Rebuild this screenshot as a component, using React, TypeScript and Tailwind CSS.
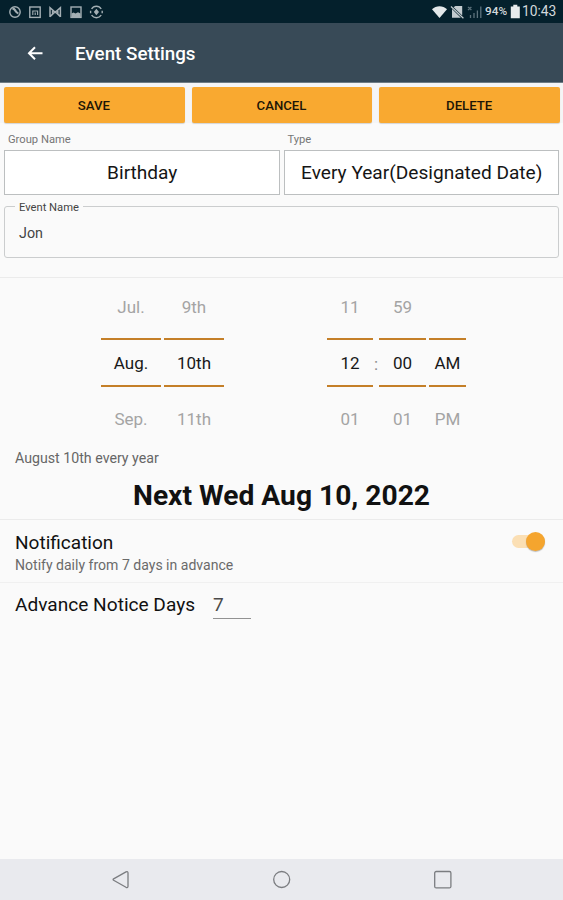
import { clsx } from "clsx"
import { useState } from "react"

type PickerColumn = {
  width: string
  values: [string, string, string]
}

const dateColumns: PickerColumn[] = [
  { width: "w-[60px]", values: ["Jul.", "Aug.", "Sep."] },
  { width: "w-[60px]", values: ["9th", "10th", "11th"] },
]

const StatusIcons = () => {
  return (
    <svg width="96" height="16" viewBox="0 0 96 16" fill="none" stroke="#a4afb4" strokeWidth="1.4">
      {/* Sync */}
      <circle cx="7" cy="8" r="5.2" />
      <path d="M4.4 4.6c2 0 2.2.8 3 2.2s1.4 2.4 3 2.6" strokeWidth="2.2" />
      {/* Calendar */}
      <rect x="21.8" y="3" width="10.4" height="10.4" />
      <path d="M24.8 11V7h4.8v4M27.2 8.5V11" strokeWidth="1.1" />
      {/* Mail */}
      <path d="M42 13V3.6l5.2 4.6 5.2-4.6V13M42 12.6l5.2-4.8 5.2 4.8M44.6 5.5v5M49.8 5.5v5" strokeWidth="1.5" />
      {/* Picture */}
      <rect x="63" y="3" width="10" height="10.4" />
      <path d="M63.5 9.6l2-1 2 1 2.5-1.4 2.5 1.4v3.8h-9z" fill="#a4afb4" stroke="none" />
      {/* Location */}
      <path d="M83.6 5a5.6 5.6 0 0 1 9.6 0M83.6 11a5.6 5.6 0 0 0 9.6 0M82.6 6.8v2.4M94.2 6.8v2.4" />
      <path d="M88.4 4.8L91 8l-2.6 3.2L85.8 8z" fill="#a4afb4" stroke="none" />
    </svg>
  )
}

const StatusBar = () => {
  return (
    <div className="flex h-[23px] items-center bg-[#04202c] pr-[6px] pl-[8px] text-[#d3d9dc]">
      <StatusIcons />
      <div className="ml-auto flex items-center">
        <svg width="52" height="16" viewBox="0 0 52 16" fill="none" className="mr-px">
          <path d="M0 5.2C4.2 1.2 10.8 1.2 15 5.2L7.5 14z" fill="#e3e8ea" />
          <path d="M23.4 2h6.8v9.6L21.6 3.2zM20 5l8.8 8.8H20z" fill="#c3cbcf" />
          <path d="M19 2.5l12.4 11.7" stroke="#c3cbcf" strokeWidth="1.2" />
          <path d="M36 3l3.4 3M39.4 3L36 6M38.5 14v-3M42 14V9M45.4 14V6.5M48.8 14V2.5" stroke="#5d727c" strokeWidth="1.3" />
        </svg>
        <span className="w-[24px] pt-px text-[11.8px] leading-none font-medium">94%</span>
        <svg width="11" height="15" viewBox="0 0 11 15" className="mr-px ml-px">
          <path d="M3.3 0.8h4V2.4h2.5V14.2H0.8V2.4h2.5z" fill="#e8ebec" />
        </svg>
        <span className="w-[35px] pt-px text-[13.8px] leading-none whitespace-nowrap">10:43</span>
      </div>
    </div>
  )
}

const Column = ({ width, values }: PickerColumn) => {
  return (
    <div className={clsx("flex flex-col text-center text-[17px] leading-[46px] text-[#a4a4a4]", width)}>
      <div className="h-[53px] leading-[44px]">{values[0]}</div>
      <div className="h-[49px] border-y-2 border-[#c47f28] text-[#181818]">{values[1]}</div>
      <div className="pt-[9px]">{values[2]}</div>
    </div>
  )
}

const SelectBox = ({ label, value }: { label: string; value: string }) => {
  return (
    <div className="flex-1">
      <div className="h-[22px] pl-[4px] text-[11.2px] leading-[23px] text-[#767676]">{label}</div>
      <div className="flex h-[45px] items-center justify-center border border-[#bcbfc0] bg-white pt-[2px] pl-px text-[19.1px] whitespace-nowrap text-[#151515]">
        {value}
      </div>
    </div>
  )
}

export default function App() {
  const [enabled, setEnabled] = useState(true)

  return (
    <div className="flex h-[900px] w-[563px] flex-col overflow-hidden bg-[#fafafa] font-[Roboto,sans-serif] text-[#111]">
      <StatusBar />

      <header className="flex h-[60px] items-center border-b border-[#6f7c85] bg-[#384a57] pl-[27px] text-white">
        <svg width="17" height="16" viewBox="0 0 17 16" fill="none" stroke="white" strokeWidth="2">
          <path d="M15.5 8.3H2.2M8 2.3l-6 6 6 6" />
        </svg>
        <h1 className="ml-[31px] pt-[3px] text-[18.8px] leading-none font-medium">Event Settings</h1>
      </header>

      {/* Actions */}
      <div className="flex gap-[7px] bg-[#f5f5f6] pt-[4px] pr-[3px] pl-[4px]">
        {["SAVE", "CANCEL", "DELETE"].map((action) => (
          <button
            key={action}
            className="h-[36px] flex-1 rounded-[2px] bg-[#f9a930] pt-[2px] pr-px text-[13.2px] font-medium text-[#1d1606] shadow-[0_1px_1px_rgba(0,0,0,0.15)]"
          >
            {action}
          </button>
        ))}
      </div>

      <div className="flex gap-[4px] pt-[5px] pr-[4px] pl-[4px]">
        <SelectBox label="Group Name" value="Birthday" />
        <SelectBox label="Type" value="Every Year(Designated Date)" />
      </div>

      <fieldset className="mt-[5px] mr-[4px] ml-[4px] h-[58px] rounded-[3px] border border-[#cbcdce] pl-[10px]">
        <legend className="h-[12px] px-[4px] text-[11.2px] leading-[15px] text-[#444]">Event Name</legend>
        <div className="pt-[11px] pl-[4px] text-[14.3px] leading-[20px] text-[#444]">Jon</div>
      </fieldset>

      {/* Date and time */}
      <div className="mt-[19px] flex h-[169px] border-t border-[#ebebeb] pt-[7px] pl-[101px]">
        <div className="flex gap-[3px]">
          {dateColumns.map((column) => (
            <Column key={column.values[0]} {...column} />
          ))}
        </div>
        <div className="ml-[103px] flex">
          <Column width="w-[46px]" values={["11", "12", "01"]} />
          <span className="w-[6px] pt-[56px] text-center text-[17px] leading-[46px] text-[#8a8a8a]">:</span>
          <Column width="w-[47px]" values={["59", "00", "01"]} />
          <div className="ml-[3px] text-center text-[17px] leading-[46px]">
            <div className="h-[53px]" />
            <div className="h-[49px] w-[37px] border-y-2 border-[#c47f28] text-[#181818]">AM</div>
            <div className="pt-[9px] text-[#a4a4a4]">PM</div>
          </div>
        </div>
      </div>

      <p className="h-[26px] pl-[15px] text-[14.2px] leading-[24px] text-[#666]">August 10th every year</p>
      <p className="h-[48px] border-b border-[#ebebeb] text-center text-[28.2px] leading-[47px] font-bold">
        Next Wed Aug 10, 2022
      </p>

      <div className="flex h-[63px] justify-between border-b border-[#f0f0f0] pr-[18px] pl-[15px]">
        <div className="pt-[11px]">
          <div className="text-[19.05px] leading-[24px]">Notification</div>
          <div className="text-[14.05px] leading-[21px] text-[#6a6a6a]">Notify daily from 7 days in advance</div>
        </div>
        <button
          role="switch"
          aria-checked={enabled}
          aria-label="Notification"
          onClick={() => setEnabled(!enabled)}
          className={clsx(
            "mt-[15px] flex h-[13px] w-[33px] items-center rounded-full",
            enabled ? "justify-end bg-[#fbdfb4]" : "justify-start bg-[#ccc]"
          )}
        >
          <span
            className={clsx(
              "size-[19px] shrink-0 rounded-full shadow-[0_1px_1px_rgba(0,0,0,0.25)]",
              enabled ? "bg-[#f5a52e]" : "bg-white"
            )}
          />
        </button>
      </div>

      <div className="flex pt-[9px] pl-[15px] text-[19.1px] leading-[26px]">
        <span className="w-[198px]">Advance Notice Days</span>
        <span className="h-[27px] w-[38px] border-b border-[#929292] text-[#4a4a4a]">7</span>
      </div>

      {/* Navigation bar */}
      <nav className="mt-auto flex h-[41px] justify-between bg-[#e9eaee] px-[111px] pt-[11px]">
        <svg width="20" height="20" viewBox="0 0 20 20" fill="none" stroke="#7b7d80" strokeWidth="1.3" strokeLinejoin="round">
          <path d="M2.6 8.9L15 1.9q2-.8 2 1v13.4q0 1.8-2 1L2.6 10.3q-1-.7 0-1.4z" />
        </svg>
        <svg width="20" height="20" viewBox="0 0 20 20" fill="none" stroke="#7b7d80" strokeWidth="1.3">
          <circle cx="9.7" cy="9.5" r="8" />
        </svg>
        <svg width="20" height="20" viewBox="0 0 20 20" fill="none" stroke="#7b7d80" strokeWidth="1.3">
          <rect x="2.7" y="1.5" width="16.2" height="16.4" rx="1.5" />
        </svg>
      </nav>
    </div>
  )
}
